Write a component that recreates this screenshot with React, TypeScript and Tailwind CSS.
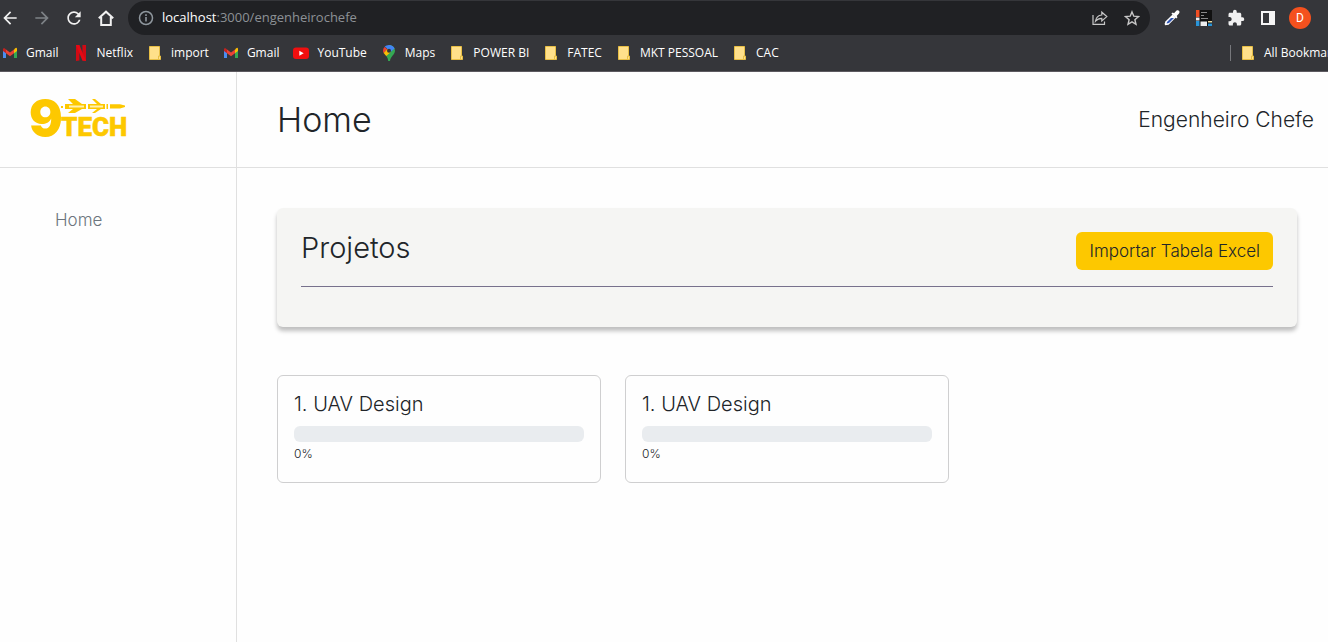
import type { ReactNode } from "react";
import { MdArrowBack, MdArrowForward, MdRefresh, MdExtension } from "react-icons/md";

type BookmarkKind = "gmail" | "netflix" | "folder" | "youtube" | "maps";

const bookmarks: { kind: BookmarkKind; label: string }[] = [
  { kind: "gmail", label: "Gmail" },
  { kind: "netflix", label: "Netflix" },
  { kind: "folder", label: "import" },
  { kind: "gmail", label: "Gmail" },
  { kind: "youtube", label: "YouTube" },
  { kind: "maps", label: "Maps" },
  { kind: "folder", label: "POWER BI" },
  { kind: "folder", label: "FATEC" },
  { kind: "folder", label: "MKT PESSOAL" },
  { kind: "folder", label: "CAC" },
];

const projects = [
  { id: 1, name: "1. UAV Design", progress: 0 },
  { id: 2, name: "1. UAV Design", progress: 0 },
];

function BookmarkIcon({ kind }: { kind: BookmarkKind }) {
  return (
    <svg viewBox="0 0 16 16" className="size-4 shrink-0" aria-hidden="true">
      {kind === "gmail" && (
        <>
          <path d="M1 5v8h3V7z" fill="#4a8df0" />
          <path d="M12 7v6h3V5z" fill="#34a853" />
          <path d="M1 3.5V6l3 2.3V4.6L2.6 3.2z" fill="#c5221f" />
          <path d="M4 4.6 8 7.6l4-3v3.7l-4 3-4-3z" fill="#ea4335" />
          <path d="M12 4.6V8.3L15 6V3.8C15 2.6 13.8 2.6 13 3.4z" fill="#fbbc04" />
        </>
      )}
      {kind === "netflix" && (
        <>
          <path d="M3 0h3.4v15.6L3 16zM9.4 0H13v16l-3.6-.4z" fill="#d00a14" />
          <path d="M3 0h3.4L13 16l-3.6-.4z" fill="#e50914" />
        </>
      )}
      {kind === "folder" && (
        <>
          <path d="M2.5 1.5h10v9.5h1v3.5h-11z" fill="#ffe08a" stroke="#e8bf45" />
          <path d="M11.5 14V11H13" fill="none" stroke="#e8bf45" />
        </>
      )}
      {kind === "youtube" && (
        <>
          <rect x="0" y="2.5" width="16" height="11.5" rx="3" fill="#f00f0f" />
          <path d="M6.3 5.8v5l4.4-2.5z" fill="#fff" />
        </>
      )}
      {kind === "maps" && (
        <>
          <path d="M8 0c3.400 0 6 2.600 6 5.800 0 3.900-4.500 5.400-5 10.200H7.200C7 12.500 5.200 11 3.800 9z" fill="#34a853" />
          <path d="M8 0c2.600 0 4.700 1.400 5.600 3.600L9.500 7 5 2.500 3.600 1.900C4.700.7 6.300 0 8 0z" fill="#4285f4" />
          <path d="M3.600 1.900 6.700 4.500 2.600 8C1.600 6 1.900 3.500 3.600 1.900z" fill="#ea4335" />
          <path d="M2.600 8 6.300 4.300 9.500 7.300 5.300 11z" fill="#fbbc04" />
          <circle cx="8" cy="5.8" r="2" fill="#35363a" />
        </>
      )}
    </svg>
  );
}

function IconButton({ label, children }: { label: string; children: ReactNode }) {
  return (
    <button type="button" aria-label={label} className="flex size-4 shrink-0 items-center justify-center">
      {children}
    </button>
  );
}

function BrowserBar() {
  return (
    <div className="overflow-hidden border-b border-[#5d5a60] bg-[#35363a] pt-px font-normal text-white">
      <div className="flex h-[34px] items-center gap-[14px] pr-[17px] pl-[2px]">
        <div className="flex items-center gap-4 text-[#f1f1f1]">
          <IconButton label="Voltar">
            <MdArrowBack className="size-5 shrink-0" />
          </IconButton>
          <IconButton label="Avançar">
            <MdArrowForward className="size-5 shrink-0 text-[#7d8286]" />
          </IconButton>
          <IconButton label="Recarregar">
            <MdRefresh className="size-5 shrink-0" />
          </IconButton>
          <IconButton label="Página inicial">
            <svg viewBox="0 0 16 16" className="size-4" fill="none" stroke="currentColor" strokeWidth="2">
              <path d="M.8 8.300 8 1.700l7.200 6.600M3.200 7v8h9.600V7" />
            </svg>
          </IconButton>
        </div>
        <div className="flex h-full min-w-0 flex-1 items-center gap-2 rounded-full bg-[#202124] px-[10px]">
          <svg viewBox="0 0 16 16" className="size-4 shrink-0" fill="none" stroke="#8f979e" strokeWidth="1.5">
            <circle cx="8" cy="8" r="6.5" />
            <path d="M8 7v4.500M8 4.300v1.600" strokeWidth="1.6" />
          </svg>
          <p className="min-w-0 flex-1 truncate font-['Open_Sans',sans-serif] text-[13px] text-[#8d9196]">
            <span className="text-white">localhost</span>:3000/engenheirochefe
          </p>
          <div className="flex gap-4 text-[#c7c7c7]">
            <IconButton label="Compartilhar">
              <svg viewBox="0 0 16 16" className="size-4" fill="none" stroke="currentColor" strokeWidth="1.2">
                <path d="M1 5v9.400h11.500V11.500" />
                <path d="M3.500 11.200C4 7.500 6.300 5.300 9.800 5V2.200l5 4.400-5 4.400V8.300C7 8.300 5 9.300 3.500 11.200z" />
              </svg>
            </IconButton>
            <IconButton label="Favoritar">
              <svg viewBox="0 0 16 16" className="size-4" fill="none" stroke="currentColor" strokeWidth="1.4">
                <path d="m8 1.900 1.800 4.300 4.700.4-3.600 3.100 1.100 4.600L8 11.800l-4 2.500 1.100-4.600L1.500 6.600l4.700-.4z" />
              </svg>
            </IconButton>
          </div>
        </div>
        <div className="flex items-center gap-4">
          <IconButton label="Conta-gotas">
            <svg viewBox="0 0 16 16" className="size-4">
              <path d="M1.200 15.200.6 14l.8-2.400L8.600 4.400l3.200 3.200-7.200 7.200z" fill="#fff" />
              <path d="M2.600 13.400 3 12l4-4h3l-5 5z" fill="#3057b5" />
              <path d="m7.400 3.500 1.400-1.100 1.200.9L12.300.8c2-1.500 4.200.6 2.700 2.700l-2.300 2.600.8 1.200-1.300 1.300z" fill="#fff" />
            </svg>
          </IconButton>
          <IconButton label="Mind the design">
            <svg viewBox="0 0 16 16" className="size-4">
              <path fill="#111" d="M0 0h16v16H0z" />
              <path fill="#f04e23" d="M0 0h3.500v7H0z" />
              <path fill="#eee" d="M0 7.500h3.500v3H0zM4.500 11.500h6.500V16H4.500z" />
              <path fill="#2994d8" d="M0 11h3.500v5H0zM12 13.500h4V16h-4z" />
              <path fill="#e8d9a0" d="M12 11h4v1.500h-4z" />
              <path stroke="#888" d="M5 2.500h6M5 5.500h3M5 8.500h7" />
            </svg>
          </IconButton>
          <IconButton label="Extensões">
            <MdExtension className="size-[18px] shrink-0 text-[#f1f1f1]" />
          </IconButton>
          <IconButton label="Painel lateral">
            <svg viewBox="0 0 16 16" className="size-4">
              <path d="M1 1h14v14H1zM3 3v10h6V3z" fill="#f5f5f5" fillRule="evenodd" />
            </svg>
          </IconButton>
          <button
            type="button"
            aria-label="Perfil"
            className="-ml-[3px] flex size-[22px] shrink-0 items-center justify-center rounded-full bg-[#f4511e] font-[Roboto,sans-serif] text-xs"
          >
            D
          </button>
        </div>
      </div>
      <nav aria-label="Favoritos" className="flex h-9 items-center gap-[14px] pl-[2px] font-['Open_Sans',sans-serif] text-xs whitespace-nowrap">
        {bookmarks.map((b, i) => (
          <a key={i} href="#" className="flex shrink-0 items-center gap-2">
            <BookmarkIcon kind={b.kind} />
            {b.label}
          </a>
        ))}
        <div className="-mr-4 ml-auto flex shrink-0 items-center gap-[9px]">
          <span className="h-4 w-px bg-[#77787c]" />
          <a href="#" className="flex items-center gap-2">
            <BookmarkIcon kind="folder" />
            <span className="w-[80px]">All Bookmarks</span>
          </a>
        </div>
      </nav>
    </div>
  );
}

function Logo() {
  return (
    <svg viewBox="0 0 100 40" className="h-10 w-[100px] overflow-visible" role="img" aria-label="9TECH" fill="#fdc800">
      <text x="-1" y="36" className="font-[Inter,sans-serif] text-[50px] font-black">
        9
      </text>
      <text x="31" y="36" className="font-[Roboto,sans-serif] text-[26px] font-black" stroke="#fdc800" strokeWidth="0.5">
        TECH
      </text>
      <path d="M31 6h2v2h-2zM35 4h21v5H35zM58 4h17v5H58zM76.500 4h1.500v5h-1.500zM80 4.200h10l5 1.300v1.600l-5 1.400H80z" />
      <path d="M38-1h7l7 5H43zM38 13h7l7-4H43zM62-1h3l6 5h-4zM62 13h3l6-4h-4z" />
      <path d="M39 5.500h15v2H39zM60 5.500h13v2H60z" fill="#fff0b0" />
    </svg>
  );
}

function ProjectCard({ name, progress }: { name: string; progress: number }) {
  return (
    <article className="rounded-md border border-[#cfcfd0] p-4">
      <h3 className="mb-[10px] text-xl leading-6">{name}</h3>
      <div
        role="progressbar"
        aria-label={name}
        aria-valuenow={progress}
        aria-valuemin={0}
        aria-valuemax={100}
        className="h-4 overflow-hidden rounded-md bg-[#e9ecef]"
      >
        <div className="h-full bg-[#fdc800]" style={{ width: `${progress}%` }} />
      </div>
      <p className="text-xs leading-6">{progress}%</p>
    </article>
  );
}

export default function App() {
  return (
    <div className="flex min-h-screen flex-col overflow-x-hidden bg-[#fefefe] font-[Inter,sans-serif] font-light text-[#212529]">
      <BrowserBar />
      <div className="flex flex-1">
        <aside className="w-[237px] shrink-0 border-r border-[#e0e0e0]">
          <div className="flex h-24 items-center border-b border-[#e0e0e0] pl-[30px]">
            <Logo />
          </div>
          <nav className="px-[55px] py-10">
            <a href="#" className="text-[17px] leading-6 text-[#6c757d]">
              Home
            </a>
          </nav>
        </aside>
        <div className="min-w-0 flex-1">
          <header className="flex h-24 items-center justify-between border-b border-[#e0e0e0] pr-[14px] pl-10">
            <h1 className="text-[34px] leading-10">Home</h1>
            <p className="text-[21px]">Engenheiro Chefe</p>
          </header>
          <main className="pt-10 pr-[31px] pl-10">
            <section className="rounded-md bg-[#f5f5f3] px-6 pt-6 pb-10 shadow-[0_4px_4px_rgba(0,0,0,0.25)]">
              <div className="flex items-start justify-between border-b border-[#77718c] pb-4">
                <h2 className="text-[29px] leading-8">Projetos</h2>
                <button type="button" className="rounded-md bg-[#fdc800] px-[13px] py-[7px] text-[17px] leading-6 font-light">
                  Importar Tabela Excel
                </button>
              </div>
            </section>
            <div className="mt-12 grid grid-cols-3 gap-6">
              {projects.map((p) => (
                <ProjectCard key={p.id} name={p.name} progress={p.progress} />
              ))}
            </div>
          </main>
        </div>
      </div>
    </div>
  );
}
